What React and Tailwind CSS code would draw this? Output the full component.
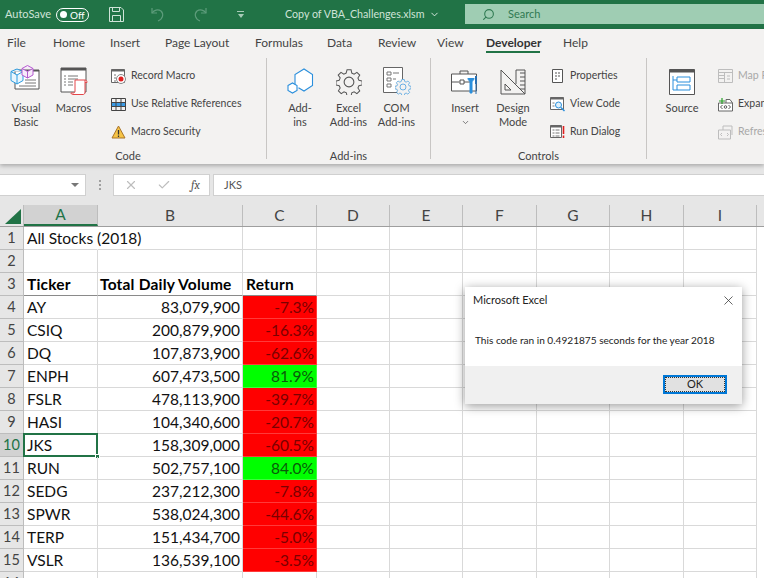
import { ChevronDown, Search, X, Check } from 'lucide-react';

const ui = { fontFamily: 'Lato, "Noto Sans", sans-serif' };
const cellFont = { fontFamily: 'Lato, "Noto Sans", sans-serif' };

const tabs = [
    ['File', 'w-[46px]'], ['Home', 'w-[57px]'], ['Insert', 'w-[55px]'], ['Page Layout', 'w-[90px]'], ['Formulas', 'w-[72px]'],
    ['Data', 'w-[51px]'], ['Review', 'w-[59px]'], ['View', 'w-[49px]'], ['Developer', 'w-[77px]'], ['Help', 'w-[40px]'],
];

const rows = [
    ['AY', '83,079,900', '-7.3%'],
    ['CSIQ', '200,879,900', '-16.3%'],
    ['DQ', '107,873,900', '-62.6%'],
    ['ENPH', '607,473,500', '81.9%'],
    ['FSLR', '478,113,900', '-39.7%'],
    ['HASI', '104,340,600', '-20.7%'],
    ['JKS', '158,309,000', '-60.5%'],
    ['RUN', '502,757,100', '84.0%'],
    ['SEDG', '237,212,300', '-7.8%'],
    ['SPWR', '538,024,300', '-44.6%'],
    ['TERP', '151,434,700', '-5.0%'],
    ['VSLR', '136,539,100', '-3.5%'],
];

const colWidths = ['w-[74px]', 'w-[145px]', 'w-[74px]', 'w-[73px]', 'w-[73px]', 'w-[74px]', 'w-[73px]', 'w-[74px]', 'w-[73px]'];
const colNames = ['A', 'B', 'C', 'D', 'E', 'F', 'G', 'H', 'I'];

const VisualBasicIcon = () => (
    <svg width="32" height="30" viewBox="0 0 32 30" fill="none">
        <path d="M5 5h24v19H5z" fill="#fff" stroke="#555" />
        <path d="M5 5h24v1.500H5z" fill="#555" />
        <path d="M15 15h11M15 18h11M9 21h17" stroke="#777" />
        <path d="M1 6.500l6-2.500 6 2.500v9L7 19l-6-3.500zM1 6.500L7 10l6-3.500M7 10v9" fill="#eaf6fd" stroke="#2a9be0" />
        <path d="M12 3.500L17.500.5 23 3.500V10l-5.500 3L12 10zM12 3.500l5.500 3 5.500-3M17.500 6.500V13" fill="#f7eafa" stroke="#b45ad0" />
    </svg>
);

const MacrosIcon = () => (
    <svg width="28" height="28" viewBox="0 0 28 28" fill="none">
        <path d="M1 1h25v24H1z" fill="#fff" stroke="#555" />
        <path d="M1 1h25v2.500H1z" fill="#555" />
        <path d="M4 9h2M8 9h10M4 12h2M8 12h10M4 15h2M8 15h5M4 18h2M8 18h5" stroke="#777" />
        <path d="M15 13h10v12c0 2-1 2.500-2 2.500H13c-1 0-2-.5-2-1.500h2c1 0 2-.5 2-1.500zM25 13c1.500 0 2 1 2 2.500h-2" fill="#fff" stroke="#e4474a" />
    </svg>
);

const RecordIcon = () => (
    <svg width="15" height="15" viewBox="0 0 15 15" fill="none">
        <path d="M.5.500h13v13H.5z" fill="#fff" stroke="#666" />
        <path d="M.5.500h13v2H.5z" fill="#666" />
        <path d="M3 6h2M3 9h2M3 12h2" stroke="#777" />
        <circle cx="10" cy="10" r="4.500" fill="#fff" stroke="#888" />
        <circle cx="10" cy="10" r="2.500" fill="#e02020" />
    </svg>
);

const RelativeIcon = () => (
    <svg width="15" height="13" viewBox="0 0 15 13" fill="none">
        <path d="M.5 5h14v4H.5z" fill="#3b9be5" />
        <path d="M.5.500h14v12H.5zM.5 4.500h14M.5 8.500h14M5 .5v12M10 .5v12" stroke="#444" />
    </svg>
);

const WarnIcon = () => (
    <svg width="15" height="14" viewBox="0 0 15 14" fill="none">
        <path d="M7.500 1L14 13H1z" fill="#f6c445" stroke="#a9742a" />
        <path d="M7.500 5v4.500M7.500 10.500v1.500" stroke="#333" strokeWidth="1.300" />
    </svg>
);

const AddInsIcon = () => (
    <svg width="27" height="27" viewBox="0 0 27 27" fill="none" stroke="#2a8fdc" strokeWidth="1.100">
        <path d="M8 17.500V6.500L17 1l8.500 5.500v11L17 23l-5.500-3.200" fill="#fff" />
        <path d="M1 17.500l4.500-2.500 4.500 2.500v5L5.500 25 1 22.500z" fill="#fff" />
    </svg>
);

const GearIcon = ({ size = 26, stroke = '#555' }) => (
    <svg width={size} height={size} viewBox="0 0 24 24" fill="none" stroke={stroke} strokeWidth="1">
        <path d="M10 1.500h4l.7 3.200 2.300 1 2.800-1.800 2.800 2.800-1.800 2.800 1 2.300 3.200.7v4l-3.200.7-1 2.300 1.800 2.800-2.800 2.800-2.800-1.800-2.300 1-.7 3.200h-4l-.7-3.200-2.300-1-2.800 1.800-2.800-2.800 1.800-2.800-1-2.300-3.200-.7v-4l3.200-.7 1-2.300L1.200 6.700 4 3.900l2.800 1.800 2.300-1z" transform="translate(0.9 -0.6) scale(0.93)" />
        <circle cx="12" cy="12" r="4.500" />
    </svg>
);

const ComIcon = () => (
    <div className="relative w-[28px] h-[28px]">
        <svg width="28" height="28" viewBox="0 0 28 28" fill="none">
            <path d="M.5.500h19v25H.5z" fill="#fff" stroke="#666" />
            <path d="M4 5h4v3H4zM4 11h4v3H4zM4 17h4v3H4zM10 6h6M10 12h3" stroke="#777" />
        </svg>
        <div className="absolute left-[12px] top-[12px] bg-[#f3f2f1] rounded-full"><GearIcon size={16} stroke="#2a8fdc" /></div>
    </div>
);

const InsertIcon = () => (
    <svg width="28" height="26" viewBox="0 0 28 26" fill="none">
        <path d="M9 5V2h8v3" stroke="#555" />
        <path d="M.5 5h25v17H.5z" fill="#fff" stroke="#555" />
        <path d="M.5 13h8M13 13h6" stroke="#555" />
        <path d="M9 11h4v4H9z" fill="#fff" stroke="#555" />
        <path d="M17 9c0 2 1 3 2 3v12h2V12c1 0 2-1 2-3" fill="#2a8fdc" stroke="#2a8fdc" />
        <path d="M24 7h2v8h-.5v10h-1V15H24z" fill="#2a6fb0" />
    </svg>
);

const DesignIcon = () => (
    <svg width="26" height="26" viewBox="0 0 26 26" fill="none" stroke="#555">
        <path d="M1 1l24 24H1zM5 15l6 6H5z" />
        <path d="M16 1h9v24" />
        <path d="M16 1v14M20 4h5M20 8h5M20 12h5M20 16h5M20 20h5" />
    </svg>
);

const PropertiesIcon = () => (
    <svg width="11" height="14" viewBox="0 0 11 14" fill="none">
        <path d="M.5.500h10v13H.5z" fill="#fff" stroke="#555" />
        <path d="M3 4h2M3 7h2M3 10h2M6 4h2M6 7h2" stroke="#555" />
    </svg>
);

const ViewCodeIcon = () => (
    <svg width="15" height="15" viewBox="0 0 15 15" fill="none">
        <path d="M.5.500h13v12H.5z" fill="#fff" stroke="#666" />
        <path d="M.5.500h13v2H.5z" fill="#666" />
        <circle cx="8.500" cy="8" r="3" fill="#dff0fb" stroke="#2a8fdc" />
        <path d="M11 10.500l3.500 3.500" stroke="#2a8fdc" strokeWidth="1.500" />
        <path d="M2.500 6h2M2.500 9h2" stroke="#777" />
    </svg>
);

const RunDialogIcon = () => (
    <svg width="15" height="14" viewBox="0 0 15 14" fill="none">
        <path d="M.5.500h11v12H.5z" fill="#fff" stroke="#666" />
        <path d="M.5.500h11v2H.5z" fill="#666" />
        <path d="M2.500 5h2M5.500 5h4M2.500 8h2M5.500 8h4M2.500 11h2M5.500 11h4" stroke="#777" />
        <path d="M13.500 1v8M13.500 10.500V13" stroke="#e02020" strokeWidth="1.600" />
    </svg>
);

const SourceIcon = () => (
    <svg width="26" height="26" viewBox="0 0 26 26" fill="none">
        <path d="M.5.500h25v25H.5z" fill="#fff" stroke="#555" />
        <path d="M.5.500h25v3H.5z" fill="#555" />
        <path d="M4 7v14h4M4 11h4" stroke="#2a8fdc" />
        <path d="M8 8h13v5H8zM8 16h13v5H8z" fill="#fff" stroke="#2a8fdc" />
    </svg>
);

const MapIcon = () => (
    <svg width="15" height="14" viewBox="0 0 15 14" fill="none" stroke="#bdbdbd">
        <path d="M.5.500h14v13H.5zM.5 3.500h14M.5 6.500h6M.5 9.500h6M6.500 3.500v10" />
        <path d="M9 7h3M9 10h3" />
    </svg>
);

const ExpandIcon = () => (
    <svg width="15" height="15" viewBox="0 0 15 15" fill="none">
        <path d="M.5 6h14v8H.5zM8 6V2.500h4l2.500 3.500" fill="#fff" stroke="#666" />
        <path d="M4 1v6M1 4h6" stroke="#2aa02a" strokeWidth="1.200" />
        <path d="M4.500 8L2.500 10l2 2M10.500 8l2 2-2 2" stroke="#555" />
        <circle cx="7.500" cy="10" r="1.300" stroke="#555" />
    </svg>
);

const RefreshIcon = () => (
    <svg width="15" height="15" viewBox="0 0 15 15" fill="none" stroke="#bdbdbd">
        <path d="M.5 5h12v9H.5zM5 5V1h9v9" />
        <path d="M4 8L2.500 9.500 4 11M9 8l1.500 1.500L9 11" />
    </svg>
);

const SaveIcon = () => (
    <svg width="15" height="15" viewBox="0 0 15 15" fill="none" stroke="#cfe3d8">
        <path d="M.5.500h11.500l2.500 2.500v11.500H.5z" />
        <path d="M3.500.5v4h7v-4M3.500 14.500v-6h8v6" />
    </svg>
);

const UndoIcon = ({ flip }) => (
    <svg width="14" height="15" viewBox="0 0 14 15" fill="none" stroke="#5d9c7b" strokeWidth="1.200" className={flip ? '-scale-x-100' : ''}>
        <path d="M1 1v5h5" />
        <path d="M1 6c2-3 6-4 9-2 3 3 2 8-3 10" />
    </svg>
);

const BigBtn = ({ icon, label, width, chevron }) => (
    <div className={`${width} flex flex-col items-center shrink-0`}>
        <div className="h-[37px] flex items-end justify-center">{icon}</div>
        <div className="mt-[6px] text-center text-[11px] leading-[14px] text-[#444] whitespace-nowrap">{label}</div>
        {chevron && <ChevronDown size={9} className="text-[#555] mt-[3px]" />}
    </div>
);

const SmallBtn = ({ icon, label, faded }) => (
    <div className="h-[28px] flex items-center whitespace-nowrap">
        <div className="w-[16px] flex justify-center">{icon}</div>
        <span className={`ml-[5px] text-[10.500px] ${faded ? 'text-[#a8a8a8]' : 'text-[#444]'}`}>{label}</span>
    </div>
);

const Group = ({ name, width, labelClass = '', children }) => (
    <div className={`${width} shrink-0 h-[101px] border-r border-[#c8c6c4] flex flex-col`}>
        <div className="h-[91px] shrink-0 flex items-start">{children}</div>
        <div className={`shrink-0 text-center text-[11px] leading-[14px] text-[#444] ${labelClass}`}>{name}</div>
    </div>
);

const App = () => (
    <div style={ui} className="relative w-[764px] h-[578px] overflow-hidden bg-[#e6e6e6]">
        {/* title bar */}
        <div className="h-[29px] bg-[#217346] flex items-center text-[11px] text-[#cfe3d8]">
            <span className="ml-[5px] w-[44px] text-[11px] whitespace-nowrap">AutoSave</span>
            <div className="ml-[7px] w-[33px] h-[14px] rounded-full border border-white flex items-center pl-[3px] text-white">
                <span className="w-[7px] h-[7px] rounded-full bg-white" />
                <span className="ml-[3px] text-[10px] leading-none">Off</span>
            </div>
            <div className="ml-[20px]"><SaveIcon /></div>
            <div className="ml-[27px]"><UndoIcon /></div>
            <div className="ml-[28px]"><UndoIcon flip /></div>
            <div className="ml-[28px] flex flex-col items-center w-[11px]">
                <span className="w-[7px] h-px bg-[#a7cbb7]" />
                <span className="mt-[2px] w-0 h-0 border-l-[3.500px] border-r-[3.500px] border-t-[4px] border-l-transparent border-r-transparent border-t-[#a7cbb7]" />
            </div>
            <span className="ml-[39px] text-[10.700px] w-[144px] whitespace-nowrap">Copy of VBA_Challenges.xlsm</span>
            <ChevronDown size={11} className="text-[#e3efe8]" />
            <div className="ml-[25px] flex-1 h-[20px] bg-[#9fcdb3] flex items-center text-[#2f7a52] text-[11px] self-start mt-[4px]">
                <Search size={13} className="ml-[17px] -scale-x-100" />
                <span className="ml-[13px]">Search</span>
            </div>
        </div>

        {/* ribbon */}
        <div className="h-[135px] bg-[#f3f2f1] shadow-[0_2px_4px_rgba(0,0,0,0.25)] relative">
            <div className="h-[30px] flex text-[12px] text-[#444]">
                <div className="w-[7px]" />
                {tabs.map(([t, w]) => (
                    <div key={t} className={`${w} shrink-0 h-[24px] pt-[4px] leading-[20px]`}>
                        {t === 'Developer' ? (
                            <span className="block h-[20px] border-b-2 border-[#217346] font-bold text-[#333] w-[54px]">{t}</span>
                        ) : t}
                    </div>
                ))}
            </div>
            <div className="flex -mt-px">
                <Group width="w-[267px]" name="Code" labelClass="pr-[10px]">
                    <BigBtn width="w-[52px]" icon={<VisualBasicIcon />} label={<>Visual<br />Basic</>} />
                    <BigBtn width="w-[43px]" icon={<MacrosIcon />} label="Macros" />
                    <div className="ml-[15px] mt-[4px]">
                        <SmallBtn icon={<RecordIcon />} label="Record Macro" />
                        <SmallBtn icon={<RelativeIcon />} label="Use Relative References" />
                        <SmallBtn icon={<WarnIcon />} label="Macro Security" />
                    </div>
                </Group>
                <Group width="w-[164px]" name="Add-ins">
                    <BigBtn width="w-[66px]" icon={<AddInsIcon />} label={<>Add-<br />ins</>} />
                    <BigBtn width="w-[31px]" icon={<GearIcon />} label={<>Excel<br />Add-ins</>} />
                    <div className="w-[17px]" />
                    <BigBtn width="w-[31px]" icon={<ComIcon />} label={<>COM<br />Add-ins</>} />
                </Group>
                <Group width="w-[216px]" name="Controls">
                    <BigBtn width="w-[68px]" icon={<InsertIcon />} label="Insert" chevron />
                    <BigBtn width="w-[28px]" icon={<DesignIcon />} label={<>Design<br />Mode</>} />
                    <div className="ml-[22px] mt-[4px]">
                        <SmallBtn icon={<PropertiesIcon />} label="Properties" />
                        <SmallBtn icon={<ViewCodeIcon />} label="View Code" />
                        <SmallBtn icon={<RunDialogIcon />} label="Run Dialog" />
                    </div>
                </Group>
                <div className="flex">
                    <BigBtn width="w-[70px]" icon={<SourceIcon />} label="Source" />
                    <div className="mt-[4px]">
                        <SmallBtn icon={<MapIcon />} label="Map Properties" faded />
                        <SmallBtn icon={<ExpandIcon />} label="Expansion Packs" />
                        <SmallBtn icon={<RefreshIcon />} label="Refresh Data" faded />
                    </div>
                </div>
            </div>
        </div>

        {/* formula bar */}
        <div className="mt-[10px] h-[22px] flex text-[11px] text-[#444]">
            <div className="w-[86px] bg-white border border-[#d0d0d0] border-l-0 flex items-center justify-end pr-[6px]">
                <span className="w-0 h-0 border-l-[4px] border-r-[4px] border-t-[4px] border-l-transparent border-r-transparent border-t-[#777]" />
            </div>
            <div className="w-[27px] flex flex-col items-center justify-center gap-[2px]">
                <span className="w-[2px] h-[2px] bg-[#a0a0a0]" />
                <span className="w-[2px] h-[2px] bg-[#a0a0a0]" />
                <span className="w-[2px] h-[2px] bg-[#a0a0a0]" />
            </div>
            <div className="w-[97px] bg-white border border-[#d0d0d0] flex items-center">
                <X size={14} className="ml-[10px] text-[#bdbdbd]" />
                <Check size={14} className="ml-[19px] text-[#bdbdbd]" />
                <span className="ml-[20px] text-[#555] italic font-serif text-[12px]">fx</span>
            </div>
            <div className="ml-[3px] flex-1 bg-white border border-[#d0d0d0] border-r-0 flex items-center pl-[10px] text-[11px] text-[#555]">JKS</div>
        </div>

        {/* sheet */}
        <div style={cellFont} className="mt-[9px]">
            <div className="h-[22px] flex border-b border-[#9e9e9e] text-[15.500px] text-[#444]">
                <div className="w-[24px] shrink-0 relative border-r border-[#bdbdbd]">
                    <svg width="18" height="16" className="absolute left-[4px] top-[4px]"><path d="M17 0v15H1z" fill="#217346" /></svg>
                </div>
                {colNames.map((c, i) => (
                    <div key={c} className={`${colWidths[i]} shrink-0 flex items-center justify-center border-r border-[#bdbdbd] ${i === 0 ? 'bg-[#d2d2d2] border-b-2 border-b-[#217346] text-[#217346]' : ''}`}>{c}</div>
                ))}
            </div>
            <SheetRow n={1} a="All Stocks (2018)" overflow />
            <SheetRow n={2} />
            <SheetRow n={3} a="Ticker" b="Total Daily Volume" c="Return" bold />
            {rows.map((r, i) => (
                <SheetRow key={r[0]} n={i + 4} a={r[0]} b={r[1]} c={r[2]} tone={r[2].startsWith('-') ? 'red' : 'green'} selected={r[0] === 'JKS'} />
            ))}
            <SheetRow n={16} />
        </div>

        {/* message box */}
        <div className="absolute left-[465px] top-[287px] w-[277px] h-[117px] bg-white shadow-[0_2px_10px_rgba(0,0,0,0.4)] flex flex-col">
            <div className="h-[27px] flex items-center justify-between pl-[8px] pr-[6px] text-[11px] text-[#222]">
                <span>Microsoft Excel</span>
                <X size={15} strokeWidth={1.2} className="text-[#333]" />
            </div>
            <div className="h-[52px] pl-[10px] pt-[19px] text-[10.100px] leading-[14px] text-[#222]">This code ran in 0.4921875 seconds for the year 2018</div>
            <div className="flex-1 bg-[#f0f0f0] flex justify-end items-start pr-[15px] pt-[9px]">
                <div className="w-[64px] h-[19px] bg-[#e1e1e1] border-2 border-[#0078d7] outline-1 outline-dotted outline-[#333] -outline-offset-3 flex items-center justify-center text-[11px] text-[#222]">OK</div>
            </div>
        </div>
    </div>
);

function SheetRow({ n, a, b, c, bold, overflow, tone, selected }) {
    const active = n === 10;
    const weight = bold ? 'font-bold text-black tracking-[0.2px]' : 'text-[#111]';
    const line = bold ? 'border-b-[#8a8a8a]' : 'border-b-[#d9d9d9]';
    return (
        <div className={`h-[23px] flex text-[15.500px] leading-[22px] bg-white ${weight}`}>
            <div className={`w-[24px] shrink-0 flex items-center justify-center font-normal border-r border-b border-[#bdbdbd] text-[14.500px] ${active ? 'bg-[#d2d2d2] text-[#217346]' : 'bg-[#e6e6e6] text-[#444]'}`}>{n}</div>
            <div className={`relative w-[74px] shrink-0 border-r border-b border-[#d9d9d9] ${line} pl-[3px] whitespace-nowrap ${overflow ? 'border-r-transparent' : ''}`}>
                {a}
                {selected && (
                    <>
                        <span className="absolute -left-[1px] -top-[1px] w-[75px] h-[24px] border-2 border-[#217346]" />
                        <span className="absolute -right-[3px] -bottom-[3px] w-[5px] h-[5px] bg-[#217346] border border-white" />
                    </>
                )}
            </div>
            <div className={`w-[145px] shrink-0 border-r border-b border-[#d9d9d9] ${line} px-[2px] whitespace-nowrap ${bold ? 'text-left' : 'text-right'}`}>{b}</div>
            <div className={`w-[74px] shrink-0 border-r border-b px-[2px] whitespace-nowrap ${bold ? 'text-left pl-[3px] border-[#d9d9d9] ' + line : 'text-right'} ${tone === 'red' ? 'bg-[#ff0000] text-[#7a0000] border-[#ff3a3a]' : ''} ${tone === 'green' ? 'bg-[#00ff00] text-[#0a5a0a] border-[#3aff3a]' : ''} ${!tone && !bold ? 'border-[#d9d9d9]' : ''}`}>{c}</div>
            {colNames.slice(3).map((name, i) => (
                <div key={name} className={`${colWidths[i + 3]} shrink-0 border-r border-b border-[#d9d9d9]`} />
            ))}
        </div>
    );
}

export default App;
